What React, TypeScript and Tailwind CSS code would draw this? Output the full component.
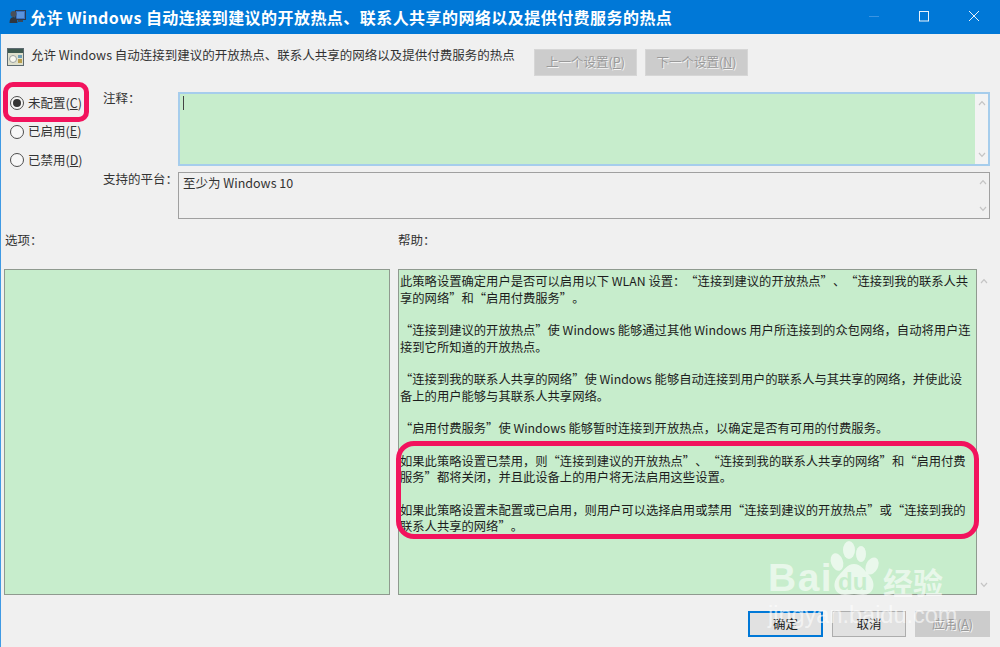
const help: string[][] = [
  ["此策略设置确定用户是否可以启用以下 WLAN 设置：“连接到建议的开放热点”、“连接到我的联系人共", "享的网络”和“启用付费服务”。"],
  ["“连接到建议的开放热点”使 Windows 能够通过其他 Windows 用户所连接到的众包网络，自动将用户连", "接到它所知道的开放热点。"],
  ["“连接到我的联系人共享的网络”使 Windows 能够自动连接到用户的联系人与其共享的网络，并使此设", "备上的用户能够与其联系人共享网络。"],
  ["“启用付费服务”使 Windows 能够暂时连接到开放热点，以确定是否有可用的付费服务。"],
  ["如果此策略设置已禁用，则“连接到建议的开放热点”、“连接到我的联系人共享的网络”和“启用付费", "服务”都将关闭，并且此设备上的用户将无法启用这些设置。"],
  ["如果此策略设置未配置或已启用，则用户可以选择启用或禁用“连接到建议的开放热点”或“连接到我的", "联系人共享的网络”。"],
];

const font = "font-['Noto_Sans_CJK_SC','Noto_Sans',sans-serif]";

function Chevrons({ top = "pt-[7px]", bottom = "pb-[7px]" }: { top?: string; bottom?: string }) {
  return (
    <div className={`w-[13px] shrink-0 flex flex-col justify-between items-center ${top} ${bottom}`}>
      <svg width="8" height="6" viewBox="0 0 8 6" fill="none" stroke="#c4c4c4" strokeWidth="1.2"><path d="M1 5l3-3.4L7 5" /></svg>
      <svg width="8" height="6" viewBox="0 0 8 6" fill="none" stroke="#c4c4c4" strokeWidth="1.2"><path d="M1 1l3 3.4L7 1" /></svg>
    </div>
  );
}

function Radio({ label, hot, checked }: { label: string; hot: string; checked?: boolean }) {
  return (
    <div className="flex items-center h-[14px] gap-[4px]">
      <span className="w-[14px] h-[14px] rounded-full border border-[#4d4d4d] bg-[#f7f7f7] flex items-center justify-center shrink-0">
        {checked && <span className="w-[8px] h-[8px] rounded-full bg-[#333]" />}
      </span>
      <span className="text-[12.5px] text-[#333] whitespace-nowrap">
        {label}(<span className="underline">{hot}</span>)
      </span>
    </div>
  );
}

function DisabledButton({ label, hot }: { label: string; hot: string }) {
  return (
    <div className="w-[103px] h-[27px] bg-[#cccccc] border border-[#d6d6d6] flex items-center justify-center text-[12.5px] text-[#9a9a9a] [text-shadow:1px_1px_0_#f4f4f4]">
      {label}(<span className="underline">{hot}</span>)
    </div>
  );
}

export default function App() {
  return (
    <div className={`relative w-[1000px] h-[647px] overflow-hidden flex flex-col bg-[#f0f0f0] [text-spacing-trim:space-all] ${font}`}>
      <div className="h-[34px] shrink-0 bg-[#0078d7] flex items-center text-white">
        <svg className="ml-[9px] shrink-0" width="17" height="16" viewBox="0 0 17 16">
          <rect x="6.5" y="1.5" width="10" height="9" fill="#3a6fc0" stroke="#2b3a4d" />
          <rect x="8" y="3" width="7" height="6" fill="#5a93dc" />
          <rect x="9" y="11" width="5" height="2" fill="#39495c" />
          <circle cx="4.5" cy="5" r="3" fill="#4a4f58" />
          <path d="M0.5 14c0-4 1.5-6 4-6s4 2 4 6z" fill="#2f3640" />
        </svg>
        <div className="ml-[4px] text-[16px] font-bold whitespace-nowrap tracking-[0.45px]">
          允许 Windows 自动连接到建议的开放热点、联系人共享的网络以及提供付费服务的热点
        </div>
        <div className="ml-auto mr-px flex items-center">
          <svg width="50" height="34" viewBox="0 0 50 34" stroke="#3a94e2" strokeWidth="1"><path d="M20 16.5h10" /></svg>
          <svg width="50" height="34" viewBox="0 0 50 34" fill="none" stroke="#e8f2fb" strokeWidth="1"><rect x="20.5" y="11.5" width="9" height="9.5" /></svg>
          <svg width="50" height="34" viewBox="0 0 50 34" fill="none" stroke="#e8f2fb" strokeWidth="1"><path d="M20 11l10 10M30 11L20 21" /></svg>
        </div>
      </div>

      <div className="flex-1 flex flex-col border-l-[1px] border-[#3f9ae4] pr-[10px]">
        <div className="flex items-start mt-[15px] h-[27px]">
          <svg className="ml-[6px] -mt-[1px] shrink-0" width="17" height="18" viewBox="0 0 17 18">
            <rect x="0.5" y="0.5" width="16" height="17" fill="#dfe0cc" stroke="#5d6a70" />
            <rect x="1" y="1" width="15" height="4" fill="#3f5a50" />
            <circle cx="6" cy="11" r="3.5" fill="#f8f8f0" stroke="#9aa0a0" />
            <rect x="11" y="7" width="4" height="3" fill="#6f9fb5" />
            <rect x="11" y="11" width="4" height="4" fill="#b8a050" />
          </svg>
          <div className="ml-[7px] -mt-[3px] w-[503px] text-[12.5px] text-[#333] whitespace-nowrap">
            允许 Windows 自动连接到建议的开放热点、联系人共享的网络以及提供付费服务的热点
          </div>
          <div className="flex gap-[8px]">
            <DisabledButton label="上一个设置" hot="P" />
            <DisabledButton label="下一个设置" hot="N" />
          </div>
        </div>

        <div className="flex mt-[16px]">
          <div className="w-[102px] shrink-0 pl-[9px] pt-[4px] flex flex-col gap-[14.5px]">
            <Radio label="未配置" hot="C" checked />
            <Radio label="已启用" hot="E" />
            <Radio label="已禁用" hot="D" />
          </div>
          <div className="flex-1 grid grid-cols-[75px_812px] grid-rows-[74px_47px] gap-y-[6px] text-[12.5px] text-[#333]">
            <div className="-mt-[3px]">注释：</div>
            <div className="border-2 border-[#a6cdec] bg-[#f3f3f3] flex">
              <div className="flex-1 bg-[#c7edcc] pl-[3px] pt-[1px]">
                <div className="w-px h-[14px] bg-[#444] mt-[1px]" />
              </div>
              <Chevrons top="pt-[6px]" bottom="pb-[6px]" />
            </div>
            <div className="-mt-[2px]">支持的平台：</div>
            <div className="border-[1.5px] border-[#a0a0a0] flex">
              <div className="flex-1 pl-[4px] pt-[1px] text-[#333]">至少为 Windows 10</div>
              <Chevrons top="pt-[6px]" bottom="pb-[6px]" />
            </div>
          </div>
        </div>

        <div className="flex mt-[12px] text-[12.5px] text-[#333] h-[38px]">
          <div className="w-[392px] pl-[4px]">选项：</div>
          <div className="pl-[5px]">帮助：</div>
        </div>

        <div className="flex h-[326px] pl-[3px]">
          <div className="w-[386px] shrink-0 bg-[#c7edcc] border-[1.5px] border-[#8f9a8f]" />
          <div className="w-[579px] ml-[8px] shrink-0 bg-[#c7edcc] border-[1.5px] border-[#8f9a8f] pl-[1px] pt-[3px] text-[12.3px] leading-[16.5px] text-[#1c1c1c]">
            {help.map((p, i) => (
              <div key={i} className="mb-[16px]">
                {p.map((l, j) => (
                  <div key={j} className="whitespace-nowrap">{l}</div>
                ))}
              </div>
            ))}
          </div>
          <Chevrons top="pt-[9px]" bottom="pb-[7px]" />
        </div>

        <div className="flex justify-end gap-[9px] mt-[16px] text-[12.5px]">
          <div className="w-[75px] h-[26px] bg-[#e1e1e1] border-2 border-[#0078d7] flex items-center justify-center text-[#222]">确定</div>
          <div className="w-[74px] h-[26px] bg-[#e1e1e1] border border-[#adadad] flex items-center justify-center text-[#222]">取消</div>
          <div className="w-[75px] h-[26px] bg-[#cccccc] flex items-center justify-center text-[#9a9a9a] [text-shadow:1px_1px_0_#f4f4f4]">
            应用(<span className="underline">A</span>)
          </div>
        </div>
      </div>

      <div className="absolute left-[3px] top-[82px] w-[86px] h-[40px] border-[5px] border-[#f2135d] rounded-[10px] pointer-events-none" />
      <div className="absolute left-[396px] top-[441px] w-[583px] h-[98px] border-[5px] border-[#f2135d] rounded-[18px] pointer-events-none" />

      <div className="absolute left-[768px] top-[540px] w-[180px] h-[90px] text-white/60 pointer-events-none">
        <svg className="absolute left-[60px] top-0" width="52" height="57" viewBox="0 0 52 57" fill="#ffffff" fillOpacity="0.62">
          <ellipse cx="9" cy="22" rx="6" ry="9" transform="rotate(-20 9 22)" />
          <ellipse cx="21" cy="10" rx="6" ry="9" />
          <ellipse cx="33" cy="14" rx="5" ry="8" />
          <ellipse cx="44" cy="26" rx="6" ry="9" transform="rotate(25 44 26)" />
          <path d="M26 24c-7 0-10 6-15 11-8 8-5 20 6 20 4 0 6-1 9-1s5 1 9 1c11 0 14-12 6-20-5-5-8-11-15-11z" />
        </svg>
        <div className="absolute left-0 top-[15px] text-[39px] leading-[46px] font-['Liberation_Sans',sans-serif] font-bold tracking-[1.5px] whitespace-nowrap">Bai</div>
        <div className="absolute left-[70px] top-[27px] text-[24px] leading-[30px] font-['Liberation_Sans',sans-serif] font-bold text-[#c7edcc] whitespace-nowrap">du</div>
        <div className="absolute left-[115px] top-[22px] text-[30px] leading-[38px] font-bold whitespace-nowrap">经验</div>
        <div className="absolute left-0 top-[61px] text-[23.5px] leading-[28px] font-['Liberation_Sans',sans-serif] whitespace-nowrap">jingyan.baidu.com</div>
      </div>
    </div>
  );
}
